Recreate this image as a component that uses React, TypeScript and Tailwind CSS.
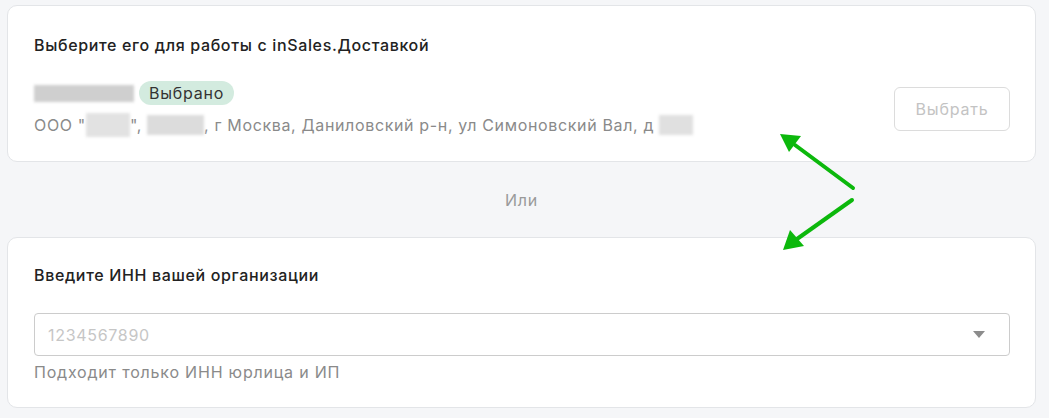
import React from "react";

function Blur({ w, h, c = "#d9d9d9" }: { w: number; h: number; c?: string }) {
  return (
    <span
      className="inline-block align-middle blur-[1.5px]"
      style={{ width: w, height: h, background: c }}
    />
  );
}

export default function App() {
  return (
    <div
      className="relative w-[1049px] h-[418px] bg-[#f5f6f8] pl-[7px] pr-[13px] pt-[5px] overflow-hidden"
      style={{ fontFamily: "Inter, 'Noto Sans', sans-serif" }}
    >
      <div className="bg-white border border-[#e3e5e8] rounded-[10px] pl-[26px] pr-[25px] pt-[28px] pb-[24px]">
        <div className="text-[16px] leading-[22px] font-medium text-[#222] tracking-[0.65px]">
          Выберите его для работы с inSales.Доставкой
        </div>
        <div className="flex items-center justify-between mt-[25px]">
          <div className="flex flex-col">
            <div className="flex items-center gap-[5px] h-[24px]">
              <Blur w={100} h={17} c="#cfcfcf" />
              <span className="bg-[#d3ebdf] rounded-full px-[10px] h-[24px] leading-[24px] text-[16px] tracking-[0.75px] text-[#333]">
                Выбрано
              </span>
            </div>
            <div className="mt-[8px] text-[16px] leading-[22px] text-[#8a8a8a] tracking-[0.65px] flex items-center whitespace-pre">
              <span>ООО "</span>
              <Blur w={44} h={24} c="#e2e2e2" />
              <span>", </span>
              <Blur w={57} h={20} c="#dcdcdc" />
              <span>, г Москва, Даниловский р-н, ул Симоновский Вал, д </span>
              <Blur w={34} h={20} c="#e0e0e0" />
            </div>
          </div>
          <button className="w-[116px] h-[44px] border border-[#dcdcdc] rounded-[6px] text-[16px] tracking-[0.8px] text-[#c3c3c3] bg-white">
            Выбрать
          </button>
        </div>
      </div>

      <div className="h-[75px] flex items-center justify-center text-[16px] tracking-[0.7px] text-[#9a9a9a]">
        Или
      </div>

      <div className="bg-white border border-[#e3e5e8] rounded-[10px] pl-[26px] pr-[25px] pt-[26px] pb-[24px]">
        <div className="text-[16px] leading-[22px] font-medium text-[#222] tracking-[0.65px]">
          Введите ИНН вашей организации
        </div>
        <div className="mt-[27px] h-[43px] border border-[#cccccc] rounded-[4px] flex items-center justify-between pl-[13px] pr-[24px]">
          <span className="text-[16px] tracking-[0.7px] text-[#c6c6c6]">1234567890</span>
          <svg width="12" height="7" viewBox="0 0 12 7">
            <path d="M0 0 L12 0 L6 7 Z" fill="#8c8c8c" />
          </svg>
        </div>
        <div className="mt-[5px] text-[16px] leading-[22px] tracking-[0.8px] text-[#8a8a8a]">
          Подходит только ИНН юрлица и ИП
        </div>
      </div>

      <svg
        className="absolute left-0 top-0 pointer-events-none"
        width="1049"
        height="418"
        viewBox="0 0 1049 418"
      >
        <g stroke="#0cb80c" strokeWidth="4" strokeLinecap="round" fill="#0cb80c">
          <line x1="853" y1="188" x2="795" y2="145" />
          <line x1="852" y1="200" x2="797" y2="239" />
        </g>
        <g fill="#0cb80c">
          <polygon points="780,134 801,136 789,152" />
          <polygon points="783,250 790,230 804,246" />
        </g>
      </svg>
    </div>
  );
}
